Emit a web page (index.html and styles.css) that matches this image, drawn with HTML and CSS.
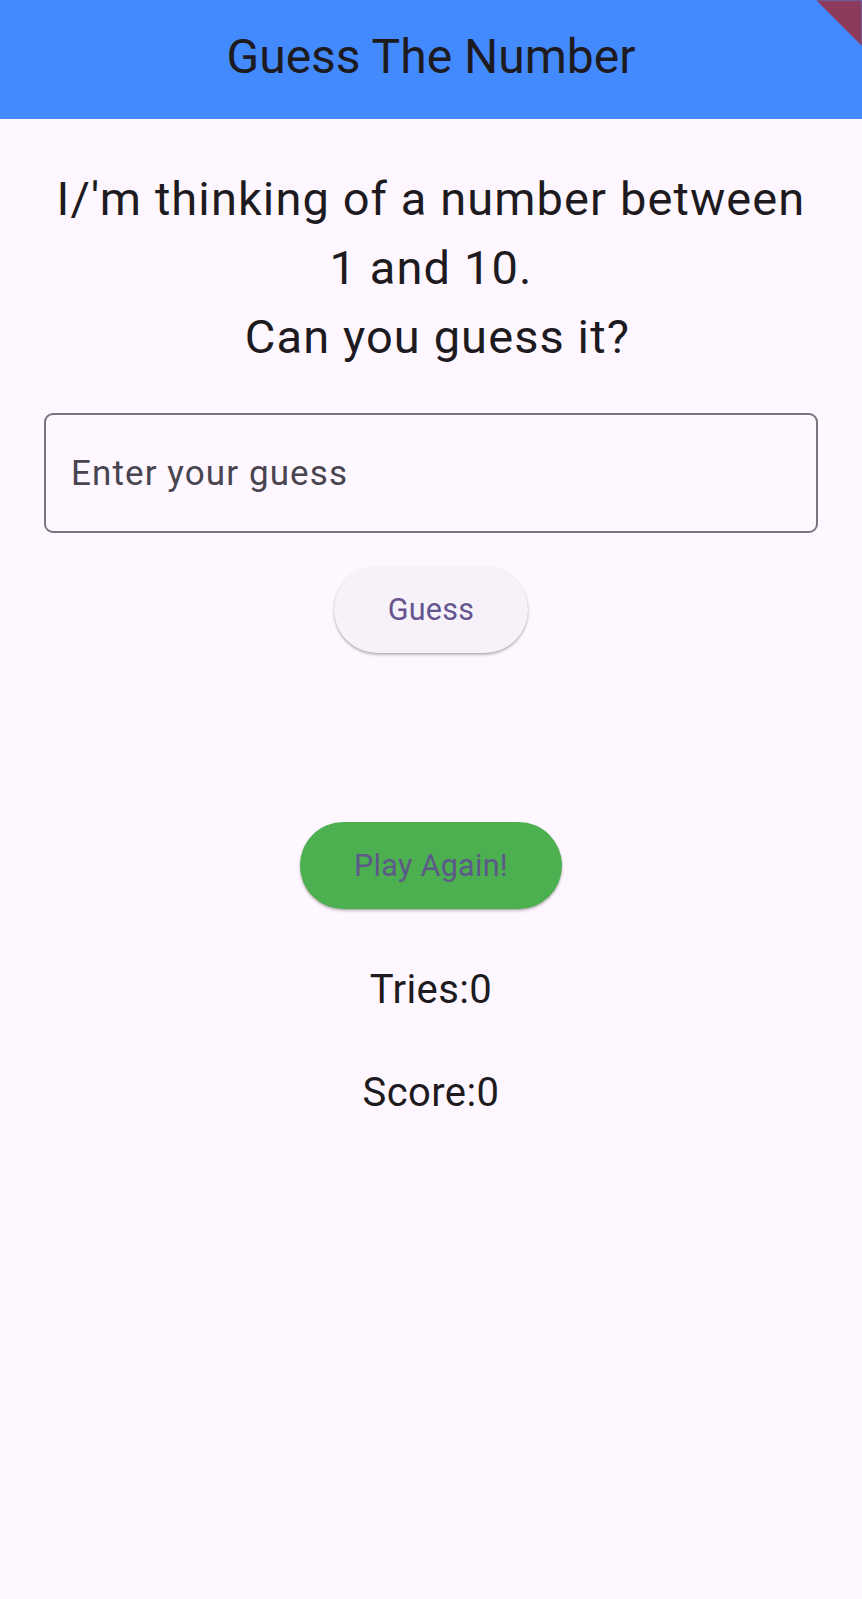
FILE: index.html
```html
<!DOCTYPE html>
<html lang="en">
<head>
<meta charset="utf-8">
<title>Guess The Number</title>
<link rel="stylesheet" href="styles.css">
</head>
<body>
<div class="app">
  <header class="appbar">
    <h1 class="appbar-title">Guess The Number</h1>
  </header>
  <main class="content">
    <p class="prompt">I/'m thinking of a number between<br>1 and 10.<br>&nbsp;Can you guess it?</p>
    <div class="field-wrap">
      <input class="field" type="text" placeholder="Enter your guess">
    </div>
    <button class="btn btn-guess" type="button">Guess</button>
    <button class="btn btn-play" type="button">Play Again!</button>
    <p class="stat stat-tries">Tries:0</p>
    <p class="stat stat-score">Score:0</p>
  </main>
  <div class="debug-banner"></div>
</div>
</body>
</html>
```

FILE: styles.css
```css
* { box-sizing: border-box; }

html, body {
  margin: 0;
  padding: 0;
  background: #fef7ff;
}

body {
  font-family: Roboto, "Noto Sans", "Liberation Sans", sans-serif;
  color: #1d1b20;
  width: 862px;
  height: 1599px;
  overflow: hidden;
}

.app {
  position: relative;
  width: 862px;
  height: 1599px;
  overflow: hidden;
}

.appbar {
  height: 119px;
  background: #448aff;
  display: flex;
  align-items: center;
  justify-content: center;
  padding-bottom: 6px;
}

.appbar-title {
  margin: 0;
  font-size: 48px;
  font-weight: 400;
  color: #1d1b20;
  line-height: 56px;
}

.content {
  display: flex;
  flex-direction: column;
  align-items: center;
  padding: 45px 44px 0;
}

.prompt {
  margin: 0;
  font-size: 47px;
  letter-spacing: 1.1px;
  line-height: 69px;
  text-align: center;
  white-space: nowrap;
}

.field-wrap {
  width: 100%;
  margin-top: 42px;
}

.field {
  display: block;
  width: 100%;
  height: 120px;
  border: 2px solid #79747e;
  border-radius: 9px;
  background: transparent;
  padding: 0 25px;
  font-family: Roboto, "Noto Sans", sans-serif;
  font-size: 35px;
  letter-spacing: 1.1px;
  color: #1d1b20;
  outline: none;
}

.field::placeholder {
  color: #49454f;
  opacity: 1;
}

.btn {
  border: none;
  border-radius: 44px;
  height: 87px;
  padding: 0 54px;
  font-family: Roboto, "Noto Sans", sans-serif;
  font-size: 30.5px;
  letter-spacing: 0.3px;
  font-weight: 400;
  color: #65558f;
  box-shadow: 0 2px 3px rgba(0, 0, 0, 0.22), 0 1px 2px rgba(0, 0, 0, 0.12);
  cursor: pointer;
}

.btn-guess {
  margin-top: 33px;
  background: #f7f2fa;
}

.btn-play {
  margin-top: 169px;
  background: #4caf50;
  color: #5d5a8a;
}

.stat {
  margin: 0;
  font-size: 40px;
  letter-spacing: 0.4px;
  line-height: 47px;
}

.stat-tries { margin-top: 57px; }
.stat-score { margin-top: 56px; }

.debug-banner {
  position: absolute;
  top: 0;
  right: 0;
  width: 46px;
  height: 46px;
  background: #8e3b5b;
  clip-path: polygon(0 0, 100% 0, 100% 100%);
  filter: blur(1px);
}
```
